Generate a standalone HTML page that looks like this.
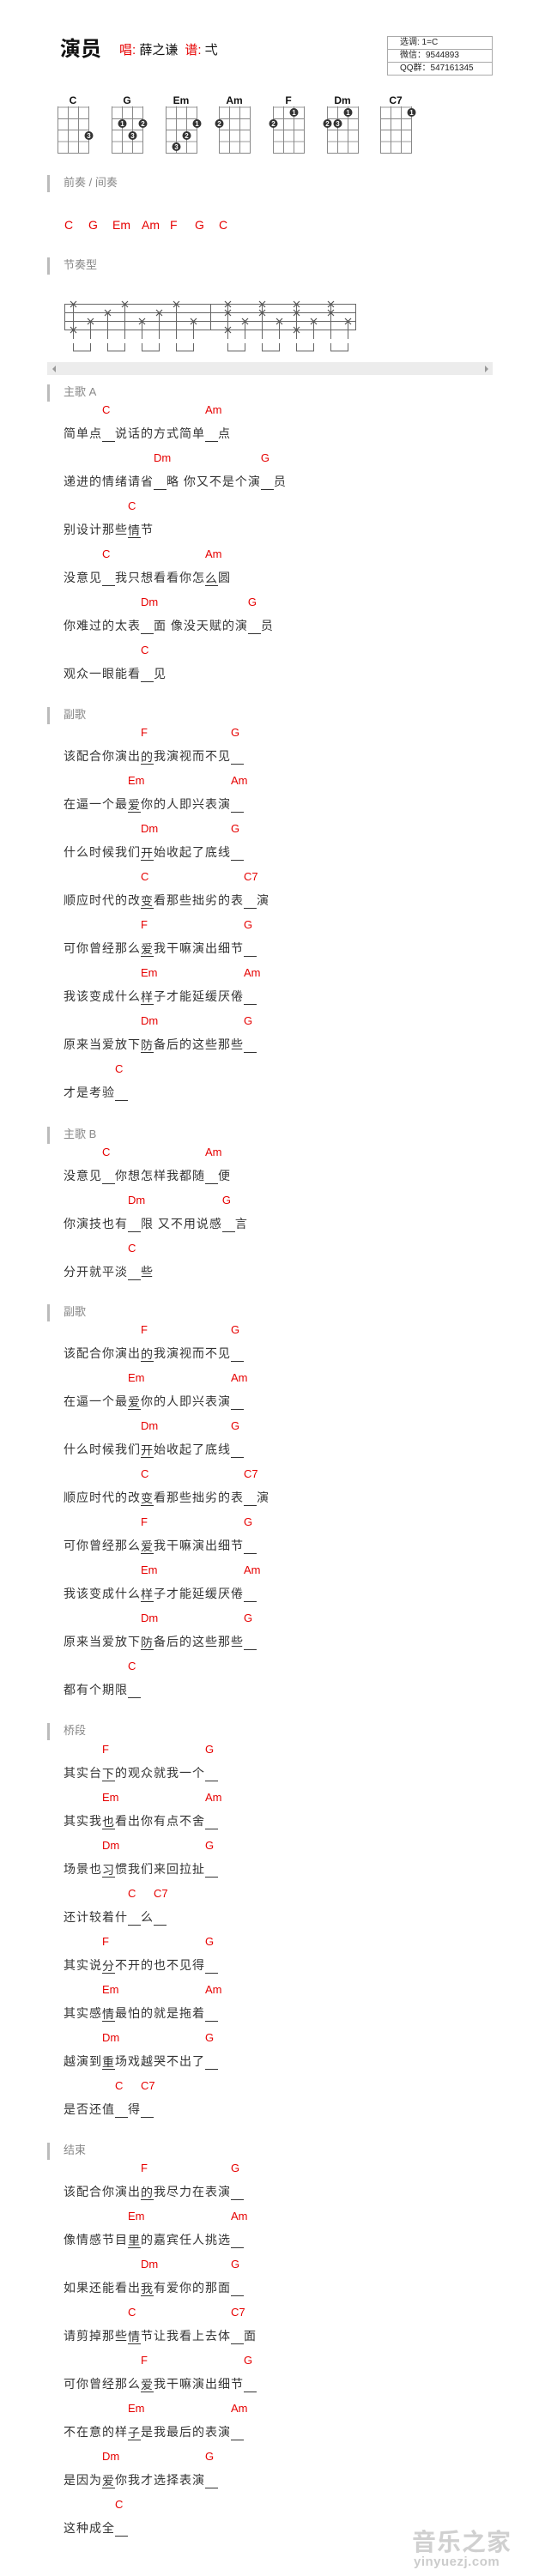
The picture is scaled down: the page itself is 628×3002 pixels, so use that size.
<!DOCTYPE html>
<html><head><meta charset="utf-8">
<style>
*{margin:0;padding:0;box-sizing:border-box}
body{width:628px;height:3002px;background:#fff;position:relative;overflow:hidden;font-family:"Liberation Sans","Noto Sans CJK SC",sans-serif;color:#333}
.abs{position:absolute}
.sec{position:absolute;left:0;width:628px}
.h{position:absolute;left:74px;top:0;height:20px;line-height:20px;font-size:13px;color:#888}
.bar{position:absolute;left:55px;top:1px;width:3px;height:20px;background:#bbb}
.ls{position:absolute;left:74px;top:16px}
.l{position:relative;height:28px;line-height:28px;margin-top:28px;font-size:14px;letter-spacing:1px;white-space:nowrap;font-family:"Liberation Sans","Noto Sans CJK SC",sans-serif}
.c{position:relative;display:inline-block;width:15px;height:18px;line-height:18px;vertical-align:middle;border-bottom:1px solid #333;letter-spacing:0}
.c b{position:absolute;left:0;top:-28px;line-height:18px;font-weight:normal;color:#e60000;font-size:13px;font-family:"Liberation Sans",sans-serif;letter-spacing:0}
.pc{position:absolute;top:253px;line-height:18px;font-size:14px;color:#e60000}
</style></head><body>

<div class="abs" style="left:70px;top:44px;font-size:24px;line-height:28px;font-weight:bold;color:#111">演员</div>
<div class="abs" style="left:139px;top:49px;font-size:15px;line-height:20px;white-space:nowrap"><span style="color:#e60000">唱: </span><span style="color:#111">薛之谦</span><span style="color:#e60000;margin-left:8px">谱: </span><span style="color:#111">弌</span></div>

<div class="abs" style="left:451px;top:42px;width:123px;height:46px;border:1px solid #aaa;font-size:10px;line-height:14px;color:#222">
<div style="height:15px;border-bottom:1px solid #aaa;padding-left:14px">选调: 1=C</div>
<div style="height:15px;border-bottom:1px solid #aaa;padding-left:14px">微信：9544893</div>
<div style="height:14px;padding-left:14px">QQ群：547161345</div>
</div>

<svg class="abs" style="left:0;top:0" width="628" height="200" font-family="Liberation Sans, sans-serif">
<defs>
<g id="grid">
<line x1="0" y1="125" x2="36" y2="125" stroke="#ccc" stroke-width="2"/>
<line x1="0" y1="138.5" x2="36" y2="138.5" stroke="#888"/>
<line x1="0" y1="151.5" x2="36" y2="151.5" stroke="#888"/>
<line x1="0" y1="165" x2="36" y2="165" stroke="#ccc" stroke-width="2"/>
<line x1="0" y1="178.5" x2="36" y2="178.5" stroke="#888"/>
<line x1="0.5" y1="124" x2="0.5" y2="179" stroke="#888"/>
<line x1="12.5" y1="124" x2="12.5" y2="179" stroke="#888"/>
<line x1="24.5" y1="124" x2="24.5" y2="179" stroke="#888"/>
<line x1="36.5" y1="124" x2="36.5" y2="179" stroke="#888"/>
</g>
</defs>
<g font-size="12" font-weight="bold" fill="#111" text-anchor="middle">
<text x="85" y="121">C</text><text x="148" y="121">G</text><text x="211" y="121">Em</text><text x="273" y="121">Am</text><text x="336" y="121">F</text><text x="399" y="121">Dm</text><text x="461" y="121">C7</text>
</g>
<use href="#grid" x="67"/><use href="#grid" x="130"/><use href="#grid" x="193"/><use href="#grid" x="255"/><use href="#grid" x="318"/><use href="#grid" x="381"/><use href="#grid" x="443"/>
<g fill="#333">
<circle cx="103.5" cy="158" r="5"/>
<circle cx="142.5" cy="144" r="5"/><circle cx="166.5" cy="144" r="5"/><circle cx="154.5" cy="158" r="5"/>
<circle cx="229.5" cy="144" r="5"/><circle cx="217.5" cy="158" r="5"/><circle cx="205.5" cy="171" r="5"/>
<circle cx="255.5" cy="144" r="5"/>
<circle cx="342.5" cy="131" r="5"/><circle cx="318.5" cy="144" r="5"/>
<circle cx="405.5" cy="131" r="5"/><circle cx="381.5" cy="144" r="5"/><circle cx="393.5" cy="144" r="5"/>
<circle cx="479.5" cy="131" r="5"/>
</g>
<g fill="#fff" font-size="8" text-anchor="middle" font-weight="bold">
<text x="103.5" y="161">3</text>
<text x="142.5" y="147">1</text><text x="166.5" y="147">2</text><text x="154.5" y="161">3</text>
<text x="229.5" y="147">1</text><text x="217.5" y="161">2</text><text x="205.5" y="174">3</text>
<text x="255.5" y="147">2</text>
<text x="342.5" y="134">1</text><text x="318.5" y="147">2</text>
<text x="405.5" y="134">1</text><text x="381.5" y="147">2</text><text x="393.5" y="147">3</text>
<text x="479.5" y="134">1</text>
</g>
</svg>

<div class="bar" style="top:204px;height:20px"></div>
<div class="h" style="top:203px">前奏 / 间奏</div>
<div class="pc" style="left:75px">C</div><div class="pc" style="left:103px">G</div><div class="pc" style="left:131px">Em</div><div class="pc" style="left:165px">Am</div><div class="pc" style="left:198px">F</div><div class="pc" style="left:227px">G</div><div class="pc" style="left:255px">C</div>

<div class="bar" style="top:300px;height:20px"></div>
<div class="h" style="top:299px">节奏型</div>

<svg class="abs" style="left:0;top:340px" width="628" height="80">
<g stroke="#666" stroke-width="1" fill="none">
<line x1="75" y1="14.5" x2="415" y2="14.5"/><line x1="75" y1="24.5" x2="415" y2="24.5"/><line x1="75" y1="34.5" x2="415" y2="34.5"/><line x1="75" y1="44.5" x2="415" y2="44.5"/>
<line x1="75.5" y1="14" x2="75.5" y2="45"/><line x1="245.5" y1="14" x2="245.5" y2="45"/><line x1="414.5" y1="14" x2="414.5" y2="45"/>
<path d="M85.5 14V55M105.5 34V55M125.5 24V55M145.5 14V55M165.5 34V55M185.5 24V55M205.5 14V55M225.5 34V55"/>
<path d="M265.5 14V55M285.5 34V55M305.5 14V55M325.5 34V55M345.5 14V55M365.5 34V55M385.5 14V55M405.5 34V55"/>
<path d="M85.5 60V69H105.5V60M125.5 60V69H145.5V60M165.5 60V69H185.5V60M205.5 60V69H225.5V60M265.5 60V69H285.5V60M305.5 60V69H325.5V60M345.5 60V69H365.5V60M385.5 60V69H405.5V60"/>
</g>
<g stroke="#555" stroke-width="1.2">
<path d="M82 11l7 7M89 11l-7 7M82 41l7 7M89 41l-7 7M102 31l7 7M109 31l-7 7M122 21l7 7M129 21l-7 7M142 11l7 7M149 11l-7 7M162 31l7 7M169 31l-7 7M182 21l7 7M189 21l-7 7M202 11l7 7M209 11l-7 7M222 31l7 7M229 31l-7 7"/>
<path d="M262 11l7 7M269 11l-7 7M262 21l7 7M269 21l-7 7M262 41l7 7M269 41l-7 7M282 31l7 7M289 31l-7 7M302 11l7 7M309 11l-7 7M302 21l7 7M309 21l-7 7M322 31l7 7M329 31l-7 7M342 11l7 7M349 11l-7 7M342 21l7 7M349 21l-7 7M342 41l7 7M349 41l-7 7M362 31l7 7M369 31l-7 7M382 11l7 7M389 11l-7 7M382 21l7 7M389 21l-7 7M402 31l7 7M409 31l-7 7"/>
</g>
</svg>
<div class="abs" style="left:55px;top:422px;width:519px;height:15px;background:#ececec"></div>
<div class="abs" style="left:61px;top:426px;width:0;height:0;border-top:4px solid transparent;border-bottom:4px solid transparent;border-right:4px solid #999"></div>
<div class="abs" style="left:565px;top:426px;width:0;height:0;border-top:4px solid transparent;border-bottom:4px solid transparent;border-left:4px solid #999"></div>

<!-- 主歌 A -->
<div class="sec" style="top:447px"><div class="bar"></div><div class="h">主歌 A</div><div class="ls">
<div class="l">简单点<span class="c">&nbsp;<b>C</b></span>说话的方式简单<span class="c">&nbsp;<b>Am</b></span>点</div>
<div class="l">递进的情绪请省<span class="c">&nbsp;<b>Dm</b></span>略 你又不是个演<span class="c">&nbsp;<b>G</b></span>员</div>
<div class="l">别设计那些<span class="c">情<b>C</b></span>节</div>
<div class="l">没意见<span class="c">&nbsp;<b>C</b></span>我只想看看你怎<span class="c">么<b>Am</b></span>圆</div>
<div class="l">你难过的太表<span class="c">&nbsp;<b>Dm</b></span>面 像没天赋的演<span class="c">&nbsp;<b>G</b></span>员</div>
<div class="l">观众一眼能看<span class="c">&nbsp;<b>C</b></span>见</div>
</div></div>

<!-- 副歌 -->
<div class="sec" style="top:823px"><div class="bar"></div><div class="h">副歌</div><div class="ls">
<div class="l">该配合你演出<span class="c">的<b>F</b></span>我演视而不见<span class="c">&nbsp;<b>G</b></span></div>
<div class="l">在逼一个最<span class="c">爱<b>Em</b></span>你的人即兴表演<span class="c">&nbsp;<b>Am</b></span></div>
<div class="l">什么时候我们<span class="c">开<b>Dm</b></span>始收起了底线<span class="c">&nbsp;<b>G</b></span></div>
<div class="l">顺应时代的改<span class="c">变<b>C</b></span>看那些拙劣的表<span class="c">&nbsp;<b>C7</b></span>演</div>
<div class="l">可你曾经那么<span class="c">爱<b>F</b></span>我干嘛演出细节<span class="c">&nbsp;<b>G</b></span></div>
<div class="l">我该变成什么<span class="c">样<b>Em</b></span>子才能延缓厌倦<span class="c">&nbsp;<b>Am</b></span></div>
<div class="l">原来当爱放下<span class="c">防<b>Dm</b></span>备后的这些那些<span class="c">&nbsp;<b>G</b></span></div>
<div class="l">才是考验<span class="c">&nbsp;<b>C</b></span></div>
</div></div>

<!-- 主歌 B -->
<div class="sec" style="top:1312px"><div class="bar"></div><div class="h">主歌 B</div><div class="ls">
<div class="l">没意见<span class="c">&nbsp;<b>C</b></span>你想怎样我都随<span class="c">&nbsp;<b>Am</b></span>便</div>
<div class="l">你演技也有<span class="c">&nbsp;<b>Dm</b></span>限 又不用说感<span class="c">&nbsp;<b>G</b></span>言</div>
<div class="l">分开就平淡<span class="c">&nbsp;<b>C</b></span>些</div>
</div></div>

<!-- 副歌 2 -->
<div class="sec" style="top:1519px"><div class="bar"></div><div class="h">副歌</div><div class="ls">
<div class="l">该配合你演出<span class="c">的<b>F</b></span>我演视而不见<span class="c">&nbsp;<b>G</b></span></div>
<div class="l">在逼一个最<span class="c">爱<b>Em</b></span>你的人即兴表演<span class="c">&nbsp;<b>Am</b></span></div>
<div class="l">什么时候我们<span class="c">开<b>Dm</b></span>始收起了底线<span class="c">&nbsp;<b>G</b></span></div>
<div class="l">顺应时代的改<span class="c">变<b>C</b></span>看那些拙劣的表<span class="c">&nbsp;<b>C7</b></span>演</div>
<div class="l">可你曾经那么<span class="c">爱<b>F</b></span>我干嘛演出细节<span class="c">&nbsp;<b>G</b></span></div>
<div class="l">我该变成什么<span class="c">样<b>Em</b></span>子才能延缓厌倦<span class="c">&nbsp;<b>Am</b></span></div>
<div class="l">原来当爱放下<span class="c">防<b>Dm</b></span>备后的这些那些<span class="c">&nbsp;<b>G</b></span></div>
<div class="l">都有个期限<span class="c">&nbsp;<b>C</b></span></div>
</div></div>

<!-- 桥段 -->
<div class="sec" style="top:2007px"><div class="bar"></div><div class="h">桥段</div><div class="ls" style="top:17px">
<div class="l">其实台<span class="c">下<b>F</b></span>的观众就我一个<span class="c">&nbsp;<b>G</b></span></div>
<div class="l">其实我<span class="c">也<b>Em</b></span>看出你有点不舍<span class="c">&nbsp;<b>Am</b></span></div>
<div class="l">场景也<span class="c">习<b>Dm</b></span>惯我们来回拉扯<span class="c">&nbsp;<b>G</b></span></div>
<div class="l">还计较着什<span class="c">&nbsp;<b>C</b></span>么<span class="c">&nbsp;<b>C7</b></span></div>
<div class="l">其实说<span class="c">分<b>F</b></span>不开的也不见得<span class="c">&nbsp;<b>G</b></span></div>
<div class="l">其实感<span class="c">情<b>Em</b></span>最怕的就是拖着<span class="c">&nbsp;<b>Am</b></span></div>
<div class="l">越演到<span class="c">重<b>Dm</b></span>场戏越哭不出了<span class="c">&nbsp;<b>G</b></span></div>
<div class="l">是否还值<span class="c">&nbsp;<b>C</b></span>得<span class="c">&nbsp;<b>C7</b></span></div>
</div></div>

<!-- 结束 -->
<div class="sec" style="top:2496px"><div class="bar"></div><div class="h">结束</div><div class="ls">
<div class="l">该配合你演出<span class="c">的<b>F</b></span>我尽力在表演<span class="c">&nbsp;<b>G</b></span></div>
<div class="l">像情感节目<span class="c">里<b>Em</b></span>的嘉宾任人挑选<span class="c">&nbsp;<b>Am</b></span></div>
<div class="l">如果还能看出<span class="c">我<b>Dm</b></span>有爱你的那面<span class="c">&nbsp;<b>G</b></span></div>
<div class="l">请剪掉那些<span class="c">情<b>C</b></span>节让我看上去体<span class="c">&nbsp;<b>C7</b></span>面</div>
<div class="l">可你曾经那么<span class="c">爱<b>F</b></span>我干嘛演出细节<span class="c">&nbsp;<b>G</b></span></div>
<div class="l">不在意的样<span class="c">子<b>Em</b></span>是我最后的表演<span class="c">&nbsp;<b>Am</b></span></div>
<div class="l">是因为<span class="c">爱<b>Dm</b></span>你我才选择表演<span class="c">&nbsp;<b>G</b></span></div>
<div class="l">这种成全<span class="c">&nbsp;<b>C</b></span></div>
</div></div>

<div class="abs" style="left:480px;top:2948px;font-size:28px;line-height:30px;font-weight:bold;color:#d0d0d0;letter-spacing:1px;white-space:nowrap">音乐之家</div>
<div class="abs" style="left:482px;top:2978px;font-size:15px;line-height:16px;font-weight:bold;color:#ccc;white-space:nowrap;letter-spacing:0.5px">yinyuezj.com</div>
</body></html>
